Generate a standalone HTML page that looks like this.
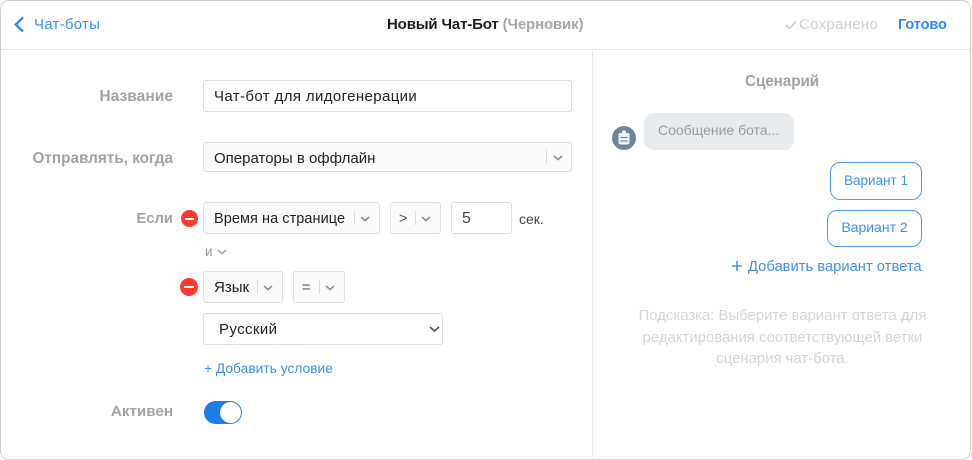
<!DOCTYPE html>
<html lang="ru"><head><meta charset="utf-8"><title>Новый Чат-Бот</title>
<style>
html,body{margin:0;padding:0;width:972px;height:460px;overflow:hidden;background:#fff}
body{position:relative;font-family:"Liberation Sans",sans-serif;font-size:15px;color:#222}
#f{position:absolute;left:0;top:0;width:969px;height:458px;border:1px solid #cfcfcf;border-radius:9px;box-sizing:content-box}
.t{position:absolute;white-space:nowrap;line-height:20px}
.l{position:absolute;white-space:nowrap;line-height:20px;font-weight:700;color:#a3a3a3;font-size:15.3px;right:799px;text-align:right}
.b{position:absolute;box-sizing:border-box;border:1px solid #dedede;border-radius:3px;background:#fafafa}
.w{background:#fff}
.s{position:absolute;width:1px;background:#dcdcdc}
svg{position:absolute;overflow:visible}
.c{fill:none;stroke:#8e8e8e;stroke-width:1.6}
.m{position:absolute;width:17px;height:17px;border-radius:50%;background:#fb3a2f}
.m:after{content:"";position:absolute;left:4px;right:4px;top:7.5px;height:2px;background:#fff}
.o{position:absolute;box-sizing:border-box;border:1px solid #4a9df8;border-radius:10px;color:#3e8ef0;text-align:center;font-size:14px;background:#fff}
</style></head><body>
<div id="f"></div>
<div style="position:absolute;left:1px;top:49px;width:969px;height:1px;background:#e6e6e6"></div>
<div style="position:absolute;left:592px;top:50px;width:1px;height:409px;background:#e6e6e6"></div>

<svg style="left:14px;top:16px" width="12" height="18"><path d="M9 1.5 L1.8 8.5 L9 15.5" fill="none" stroke="#2e8af0" stroke-width="2.4"/></svg>
<div class="t" style="left:34px;top:15px;color:#3a8ff0;font-size:15px;letter-spacing:.25px">Чат-боты</div>
<div class="t" style="left:387px;top:15px;font-size:15px;font-weight:700;color:#1d1d1d;letter-spacing:-.15px">Новый Чат-Бот <span style="color:#a6a6a6">(Черновик)</span></div>
<svg style="left:785px;top:20px" width="12" height="10"><path d="M1 5 L4.5 8.5 L11 1.5" fill="none" stroke="#cfcfcf" stroke-width="1.6"/></svg>
<div class="t" style="left:799px;top:15px;color:#cfcfcf;font-size:15px;letter-spacing:.3px">Сохранено</div>
<div class="t" style="left:898px;top:15px;color:#2e8af0;font-size:14.5px;font-weight:700;letter-spacing:-.1px">Готово</div>

<div class="l" style="top:87px;font-size:15.6px">Название</div>
<div class="b w" style="left:203px;top:80px;width:369px;height:32px"></div>
<div class="t" style="left:214px;top:87px;font-size:15px;letter-spacing:.38px">Чат-бот для лидогенерации</div>

<div class="l" style="top:149px">Отправлять, когда</div>
<div class="b" style="left:203px;top:142px;width:369px;height:30px"></div>
<div class="t" style="left:214px;top:149px;font-size:15px">Операторы в оффлайн</div>
<div class="s" style="left:546px;top:150px;height:14px"></div>
<svg style="left:553px;top:155px" width="10" height="6"><path class="c" d="M1 1 L5 4.5 L9 1"/></svg>

<div class="l" style="top:209px;font-size:14.8px">Если</div>
<div class="m" style="left:181px;top:210px"></div>
<div class="b" style="left:203px;top:202px;width:177px;height:32px"></div>
<div class="t" style="left:214px;top:209px;font-size:14.5px;letter-spacing:.06px">Время на странице</div>
<div class="s" style="left:354px;top:211px;height:14px"></div>
<svg style="left:360px;top:216px" width="10" height="6"><path class="c" d="M1 1 L5 4.5 L9 1"/></svg>
<div class="b" style="left:390px;top:202px;width:51px;height:32px"></div>
<div class="t" style="left:399px;top:209px;font-size:14.5px;color:#555">&gt;</div>
<div class="s" style="left:415px;top:211px;height:14px"></div>
<svg style="left:421px;top:216px" width="10" height="6"><path class="c" d="M1 1 L5 4.5 L9 1"/></svg>
<div class="b w" style="left:451px;top:202px;width:61px;height:32px"></div>
<div class="t" style="left:462px;top:209px;font-size:16px;color:#444">5</div>
<div class="t" style="left:519px;top:209px;font-size:14px;color:#444">сек.</div>

<div class="t" style="left:205px;top:242px;font-size:13.5px;color:#9b9b9b">и</div>
<svg style="left:217px;top:249px" width="10" height="6"><path class="c" style="stroke:#a8a8a8" d="M1 1 L5 4.5 L9 1"/></svg>

<div class="m" style="left:180px;top:278px;width:18px;height:18px"></div>
<div class="b" style="left:203px;top:271px;width:80px;height:32px"></div>
<div class="t" style="left:214px;top:278px;font-size:15px">Язык</div>
<div class="s" style="left:257px;top:280px;height:14px"></div>
<svg style="left:263px;top:285px" width="10" height="6"><path class="c" d="M1 1 L5 4.5 L9 1"/></svg>
<div class="b" style="left:293px;top:271px;width:52px;height:32px"></div>
<div class="t" style="left:302px;top:278px;font-size:14.5px;color:#555">=</div>
<div class="s" style="left:319px;top:280px;height:14px"></div>
<svg style="left:325px;top:285px" width="10" height="6"><path class="c" d="M1 1 L5 4.5 L9 1"/></svg>

<div class="b w" style="left:203px;top:313px;width:240px;height:32px"></div>
<div class="t" style="left:219px;top:320px;font-size:15px;letter-spacing:.4px">Русский</div>
<svg style="left:429px;top:326px" width="11" height="7"><path fill="none" stroke="#555" stroke-width="1.7" d="M1 1 L5.5 5 L10 1"/></svg>

<div class="t" style="left:204px;top:359px;font-size:13.8px;color:#3e8ef0">+ Добавить условие</div>

<div class="l" style="top:402px;font-size:15.2px">Активен</div>
<div style="position:absolute;left:204px;top:401px;width:38px;height:23px;border-radius:12px;background:#1a7ee8"></div>
<div style="position:absolute;left:220px;top:402px;width:21px;height:21px;border-radius:50%;background:#fff"></div>

<div class="t" style="left:745px;top:72px;font-size:15.3px;font-weight:700;color:#a3a3a3;letter-spacing:-.1px">Сценарий</div>
<div style="position:absolute;left:612px;top:126px;width:24px;height:24px;border-radius:50%;background:#6b8599"></div>
<svg style="left:612px;top:126px" width="24" height="24"><rect x="6.5" y="7" width="11" height="11.5" rx="2" fill="#eef1f3"/><rect x="10" y="4.5" width="4" height="3" rx="1" fill="#eef1f3"/><path d="M8.5 11.5 H15.5 M8.5 15 H15.5" stroke="#6b8599" stroke-width="1.1"/></svg>
<div style="position:absolute;left:644px;top:113px;width:150px;height:37px;border-radius:10px;background:#e8ebee"></div>
<div class="t" style="left:658px;top:120px;font-size:14px;color:#9a9a9a">Сообщение бота...</div>

<div class="o" style="left:830px;top:162px;width:92px;height:38px;line-height:36px;font-size:13.5px">Вариант 1</div>
<div class="o" style="left:827px;top:210px;width:95px;height:37px;line-height:33px">Вариант 2</div>
<svg style="left:732px;top:261px" width="10" height="10"><path d="M5 0 V10 M0 5 H10" stroke="#3e8ef0" stroke-width="1.5"/></svg>
<div class="t" style="left:748px;top:257px;font-size:14.75px;color:#3e8ef0">Добавить вариант ответа</div>

<div class="t" style="left:592px;width:381px;top:306px;text-align:center;font-size:14.9px;line-height:21.5px;color:#d4d4d4;white-space:normal">Подсказка: Выберите вариант ответа для<br>редактирования соответствующей ветки<br>сценария чат-бота.</div>
</body></html>
